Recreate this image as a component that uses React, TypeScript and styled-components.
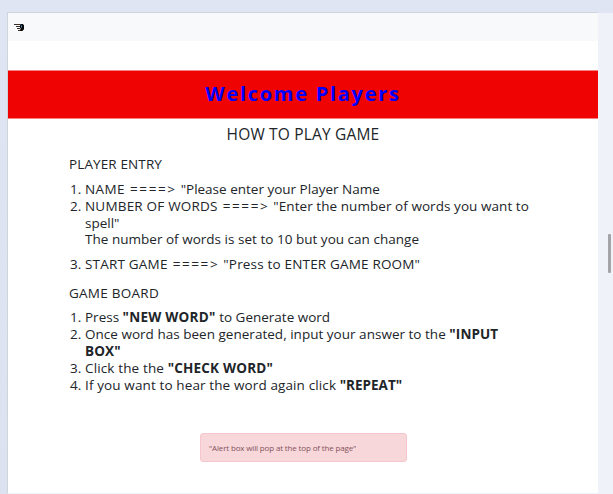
import React from 'react';
import styled, { createGlobalStyle } from 'styled-components';

const GlobalStyle = createGlobalStyle`
  * { box-sizing: border-box; }
  body {
    margin: 0;
    overflow: hidden;
    font-family: "Open Sans", "Noto Sans", sans-serif;
    color: #212529;
  }
`;

const Desktop = styled.div`
  display: flex;
  width: 613px;
  height: 494px;
  padding: 12px 0 0 7px;
  background: linear-gradient(180deg, #dfe5f2, #dbe3f1);
`;

const Page = styled.main`
  width: 591px;
  height: 482px;
  border-top: 1px solid #d0d5dc;
  border-left: 1px solid #d0d5dc;
  background: #fff;
  border-bottom: 1px solid #eef3f9;
`;

const Gutter = styled.div`
  display: flex;
  flex: 1;
  justify-content: flex-end;
  margin-top: 1px;
  padding: 221px 2px 0 0;
  background: #eff3f9;
`;

const Thumb = styled.div`
  width: 3px;
  height: 39px;
  border-radius: 1px;
  background: #a2a4a7;
`;

const Navbar = styled.nav`
  display: flex;
  height: 28px;
  padding: 10px 0 0 6px;
  background: #f8f9fa;
`;

const Logo = styled.svg`
  display: block;
  width: 11px;
  height: 9px;
`;

const Banner = styled.header`
  height: 49px;
  margin-top: 29px;
  border-top: 1px solid #f58080;
  border-bottom: 1px solid #f58080;
  background: #f00303;
  color: #0000ff;
  font-size: 20px;
  font-weight: 700;
  line-height: 46px;
  letter-spacing: 1.72px;
  text-align: center;
  white-space: nowrap;
`;

const Title = styled.h1`
  margin: 5px 0 0;
  font-size: 15.5px;
  font-weight: 400;
  line-height: 20px;
  letter-spacing: 0.18px;
  text-align: center;
`;

const Content = styled.section`
  padding-left: 61px;
`;

const Heading = styled.h2<{ $track: number }>`
  margin: 12px 0 8px;
  font-size: 13.5px;
  font-weight: 400;
  line-height: 16.8px;
  letter-spacing: ${p => p.$track}px;
`;

const Steps = styled.ol<{ $shift?: number }>`
  margin: ${p => p.$shift ?? 0}px 0 0;
  padding: 0;
  list-style: none;
  font-size: 13.5px;
  line-height: 16.8px;
`;

const Step = styled.li<{ $gap?: number }>`
  display: grid;
  grid-template-columns: 16px 1fr;
  margin-top: ${p => p.$gap ?? 0}px;
  white-space: nowrap;
`;

const Marker = styled.span`
  padding-left: 1px;
`;

const Text = styled.span<{ $track?: number }>`
  letter-spacing: ${p => p.$track ?? 0}px;
`;

const Arrow = styled.span`
  margin: 0 0.5px 0 5px;
  letter-spacing: 1.6px;
`;

const Strong = styled.strong<{ $track?: number }>`
  font-weight: 700;
  letter-spacing: ${p => p.$track ?? 0}px;
`;

const Alert = styled.div`
  width: 207px;
  height: 29px;
  margin: 40px 0 0 192px;
  padding-left: 8px;
  border: 1px solid #f5c6cb;
  border-radius: 3px;
  background: #f7d7da;
  color: #83525c;
  font-size: 8px;
  line-height: 28px;
  letter-spacing: -0.15px;
  white-space: nowrap;
`;

const arrow = '====>';

export default function App() {
  return (
    <>
      <GlobalStyle />
      <Desktop>
        <Page>
          <Navbar>
            <Logo viewBox="0 0 11 9">
              <path d="M0 1h6v1H0zM2 3h4v1H2zM3 5h3v1H3zM4 7h3v1H4z" fill="#3a3029" />
              <path d="M6.5 1h2.3L10 2.2v4L8.4 8H6.6L5.8 6.8 7 6 6 5V2z" fill="#080808" />
              <path d="M7 2.5h1v2H7z" fill="#3c96d8" />
            </Logo>
          </Navbar>
          <Banner>Welcome Players</Banner>
          <Title>HOW TO PLAY GAME</Title>
          <Content>
            <Heading $track={0.12}>PLAYER ENTRY</Heading>
            <Steps $shift={8.3}>
              <Step>
                <Marker>1.</Marker>
                <div>
                  <Text $track={0.41}>NAME</Text><Arrow>{arrow}</Arrow>{' '}
                  <Text>"Please enter your Player Name</Text>
                </div>
              </Step>
              <Step>
                <Marker>2.</Marker>
                <div>
                  <Text $track={0.2}>NUMBER OF WORDS</Text><Arrow>{arrow}</Arrow>{' '}
                  <Text $track={0.06}>"Enter the number of words you want to</Text>
                  <br />
                  <Text>spell"</Text>
                  <br />
                  <Text $track={0.02}>The number of words is set to 10 but you can change</Text>
                </div>
              </Step>
              <Step $gap={8}>
                <Marker>3.</Marker>
                <div>
                  <Text $track={0.2}>START GAME</Text><Arrow>{arrow}</Arrow>{' '}
                  <Text $track={0.18}>"Press to ENTER GAME ROOM"</Text>
                </div>
              </Step>
            </Steps>
            <Heading $track={0.26}>GAME BOARD</Heading>
            <Steps $shift={-0.5}>
              <Step>
                <Marker>1.</Marker>
                <div>Press <Strong $track={0.25}>"NEW WORD"</Strong> to Generate word</div>
              </Step>
              <Step>
                <Marker>2.</Marker>
                <div>
                  <Text $track={0.02}>Once word has been generated, input your answer to the </Text>
                  <Strong $track={0.11}>"INPUT<br />BOX"</Strong>
                </div>
              </Step>
              <Step>
                <Marker>3.</Marker>
                <div><Text $track={0.14}>Click the the </Text><Strong $track={0.19}>"CHECK WORD"</Strong></div>
              </Step>
              <Step>
                <Marker>4.</Marker>
                <div><Text $track={0.12}>If you want to hear the word again click </Text><Strong>"REPEAT"</Strong></div>
              </Step>
            </Steps>
          </Content>
          <Alert role="alert">"Alert box will pop at the top of the page"</Alert>
        </Page>
        <Gutter><Thumb /></Gutter>
      </Desktop>
    </>
  );
}
